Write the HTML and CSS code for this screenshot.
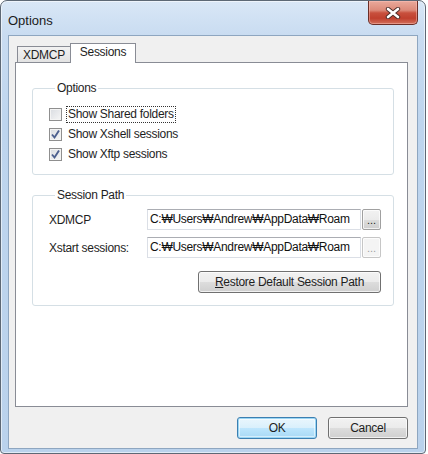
FILE: index.html
```html
<!DOCTYPE html>
<html lang="en">
<head>
  <meta charset="UTF-8">
  <title>Options</title>
  <link rel="stylesheet" href="styles.css">
</head>
<body>
  <div class="window">
    <div class="titlebar">
      <div class="title">Options</div>
      <div class="close" title="Close">
        <svg width="16" height="12" viewBox="0 0 16 12">
          <path d="M3 2 L13 10 M13 2 L3 10" stroke="#4a2a26" stroke-width="4.4" stroke-linecap="round"/>
          <path d="M3 2 L13 10 M13 2 L3 10" stroke="#ffffff" stroke-width="2.6" stroke-linecap="round"/>
        </svg>
      </div>
    </div>

    <div class="client">
      <div class="tabs">
        <div class="tab">XDMCP</div>
        <div class="tab selected">Sessions</div>
      </div>

      <div class="panel">
        <fieldset class="group group-options">
          <legend>Options</legend>
          <label class="check-row">
            <span class="checkbox"></span>
            <span class="check-text focused">Show Shared folders</span>
          </label>
          <label class="check-row">
            <span class="checkbox">
              <svg width="11" height="11" viewBox="0 0 11 11"><path d="M2 5.5 L4.5 8.5 L9 1.5" fill="none" stroke="#4c5f8e" stroke-width="1.9"/></svg>
            </span>
            <span class="check-text">Show Xshell sessions</span>
          </label>
          <label class="check-row">
            <span class="checkbox">
              <svg width="11" height="11" viewBox="0 0 11 11"><path d="M2 5.5 L4.5 8.5 L9 1.5" fill="none" stroke="#4c5f8e" stroke-width="1.9"/></svg>
            </span>
            <span class="check-text">Show Xftp sessions</span>
          </label>
        </fieldset>

        <fieldset class="group group-path">
          <legend>Session Path</legend>
          <div class="path-row">
            <span class="path-label">XDMCP</span>
            <div class="path-input">C:₩Users₩Andrew₩AppData₩Roam</div>
            <div class="btn btn-browse">...</div>
          </div>
          <div class="path-row">
            <span class="path-label">Xstart sessions:</span>
            <div class="path-input">C:₩Users₩Andrew₩AppData₩Roam</div>
            <div class="btn btn-browse disabled">...</div>
          </div>
          <div class="btn btn-restore"><u>R</u>estore Default Session Path</div>
        </fieldset>
      </div>

      <div class="actions">
        <div class="btn btn-dialog default">OK</div>
        <div class="btn btn-dialog">Cancel</div>
      </div>
    </div>
  </div>
</body>
</html>
```

FILE: styles.css
```css
body {
  margin: 0;
  background-color: #ffffff;
  font-family: "Liberation Sans", Arial, sans-serif;
  font-size: 12px;
  letter-spacing: -0.3px;
  color: #1e1e1e;
}

/* window frame */
.window {
  width: 426px;
  height: 454px;
  box-sizing: border-box;
  border: 1px solid #5d6875;
  border-radius: 7px 7px 4px 4px;
  background: linear-gradient(to bottom, #d9e7f6 0, #c9dcf1 34px, #bed5ee 120px, #bad2ec 100%);
  box-shadow: inset 0 0 0 1px rgba(255, 255, 255, 0.55);
  padding: 0 7px 4px 7px;
  display: flex;
  flex-direction: column;
}
.titlebar {
  height: 34px;
  display: flex;
  align-items: flex-start;
}
.title {
  font-size: 13px;
  letter-spacing: 0;
  line-height: 16px;
  margin-top: 12px;
  color: #1b1b1b;
}
.close {
  margin-left: auto;
  width: 50px;
  height: 24px;
  box-sizing: border-box;
  border: 1px solid #6b2e27;
  border-top: none;
  border-radius: 0 0 5px 5px;
  background: linear-gradient(to bottom, #e9a99b 0%, #dc8a79 40%, #c8503d 52%, #c0402e 75%, #d2705c 100%);
  box-shadow: inset 0 0 0 1px rgba(255, 200, 190, 0.45);
  display: flex;
  align-items: center;
  justify-content: center;
}

/* dialog body */
.client {
  flex: 1;
  background-color: #f0f0f0;
  border: 1px solid #8ea6c0;
  padding: 7px 9px 9px 6px;
  display: flex;
  flex-direction: column;
}

.tabs {
  display: flex;
  align-items: flex-end;
  padding-left: 2px;
  margin-bottom: -1px;
  position: relative;
  z-index: 1;
  height: 20px;
}
.tab {
  height: 15px;
  margin-bottom: 1px;
  padding: 0 5px;
  border: 1px solid #898c95;
  border-bottom: none;
  background: linear-gradient(to bottom, #f2f2f2, #e3e3e3);
  line-height: 16px;
}
.tab.selected {
  height: 19px;
  margin-bottom: 0;
  margin-left: -1px;
  padding: 0 9px;
  background: #ffffff;
  line-height: 17px;
}

.panel {
  flex: 1;
  background-color: #ffffff;
  border: 1px solid #898c95;
  padding: 18px 13px 0 16px;
}

/* group boxes */
.group {
  margin: 0;
  padding: 0;
  min-width: 0;
  border: 1px solid #d5dfe5;
  border-radius: 3px;
}
.group legend {
  margin-left: 6px;
  padding: 0 2px;
  line-height: 14px;
}
.group-options {
  padding: 9px 0 10px 16px;
}
.group-path {
  margin-top: 13px;
  padding: 7px 12px 12px 16px;
  display: flex;
  flex-direction: column;
}

.check-row {
  height: 20px;
  display: flex;
  align-items: center;
}
.checkbox {
  width: 13px;
  height: 13px;
  box-sizing: border-box;
  border: 1px solid #8f8f8f;
  background: linear-gradient(135deg, #d9dce1, #f6f6f6);
  box-shadow: inset 0 0 0 1px #f4f4f4;
  display: flex;
  align-items: center;
  justify-content: center;
  margin-right: 4px;
}
.check-text {
  border: 1px dotted transparent;
  padding: 0 1px;
  line-height: 15px;
}
.check-text.focused {
  border-color: #333333;
}

/* session paths */
.path-row {
  display: flex;
  align-items: center;
  height: 21px;
  margin-bottom: 7px;
}
.path-label {
  width: 98px;
  flex-shrink: 0;
  white-space: nowrap;
}
.path-input {
  flex: 1;
  min-width: 0;
  height: 21px;
  box-sizing: border-box;
  border: 1px solid #dbdfe6;
  border-top-color: #abadb3;
  padding: 0 2px;
  line-height: 19px;
  white-space: nowrap;
  overflow: hidden;
  color: #111111;
}

/* buttons */
.btn {
  box-sizing: border-box;
  border: 1px solid #707070;
  border-radius: 3px;
  background: linear-gradient(to bottom, #f2f2f2 0%, #ebebeb 50%, #dddddd 51%, #cfcfcf 100%);
  box-shadow: inset 0 0 0 1px rgba(255, 255, 255, 0.7);
  display: flex;
  align-items: center;
  justify-content: center;
  white-space: nowrap;
  color: #1e1e1e;
}
.btn-browse {
  width: 19px;
  flex-shrink: 0;
  height: 21px;
  margin-left: 1px;
  border-radius: 2px;
  font-size: 11px;
  letter-spacing: 0;
  line-height: 12px;
  border-color: #a0a0a0;
}
.btn-browse.disabled {
  color: #a0a0a0;
  border-color: #c6c6c6;
  background: #f4f4f4;
}
.btn-restore {
  align-self: flex-end;
  width: 183px;
  height: 22px;
  margin-top: 6px;
}
.btn-restore u {
  text-decoration: underline;
}

.actions {
  display: flex;
  justify-content: flex-end;
  gap: 11px;
  margin-top: 10px;
}
.btn-dialog {
  width: 80px;
  height: 22px;
}
.btn-dialog.default {
  border-color: #3c7fb1;
  box-shadow: inset 0 0 0 1px #9ad6f4, inset 0 0 0 2px rgba(255, 255, 255, 0.5);
  background: linear-gradient(to bottom, #eaf6fd 0%, #d9f0fc 50%, #bee6fd 51%, #a7d9f5 100%);
}
```
